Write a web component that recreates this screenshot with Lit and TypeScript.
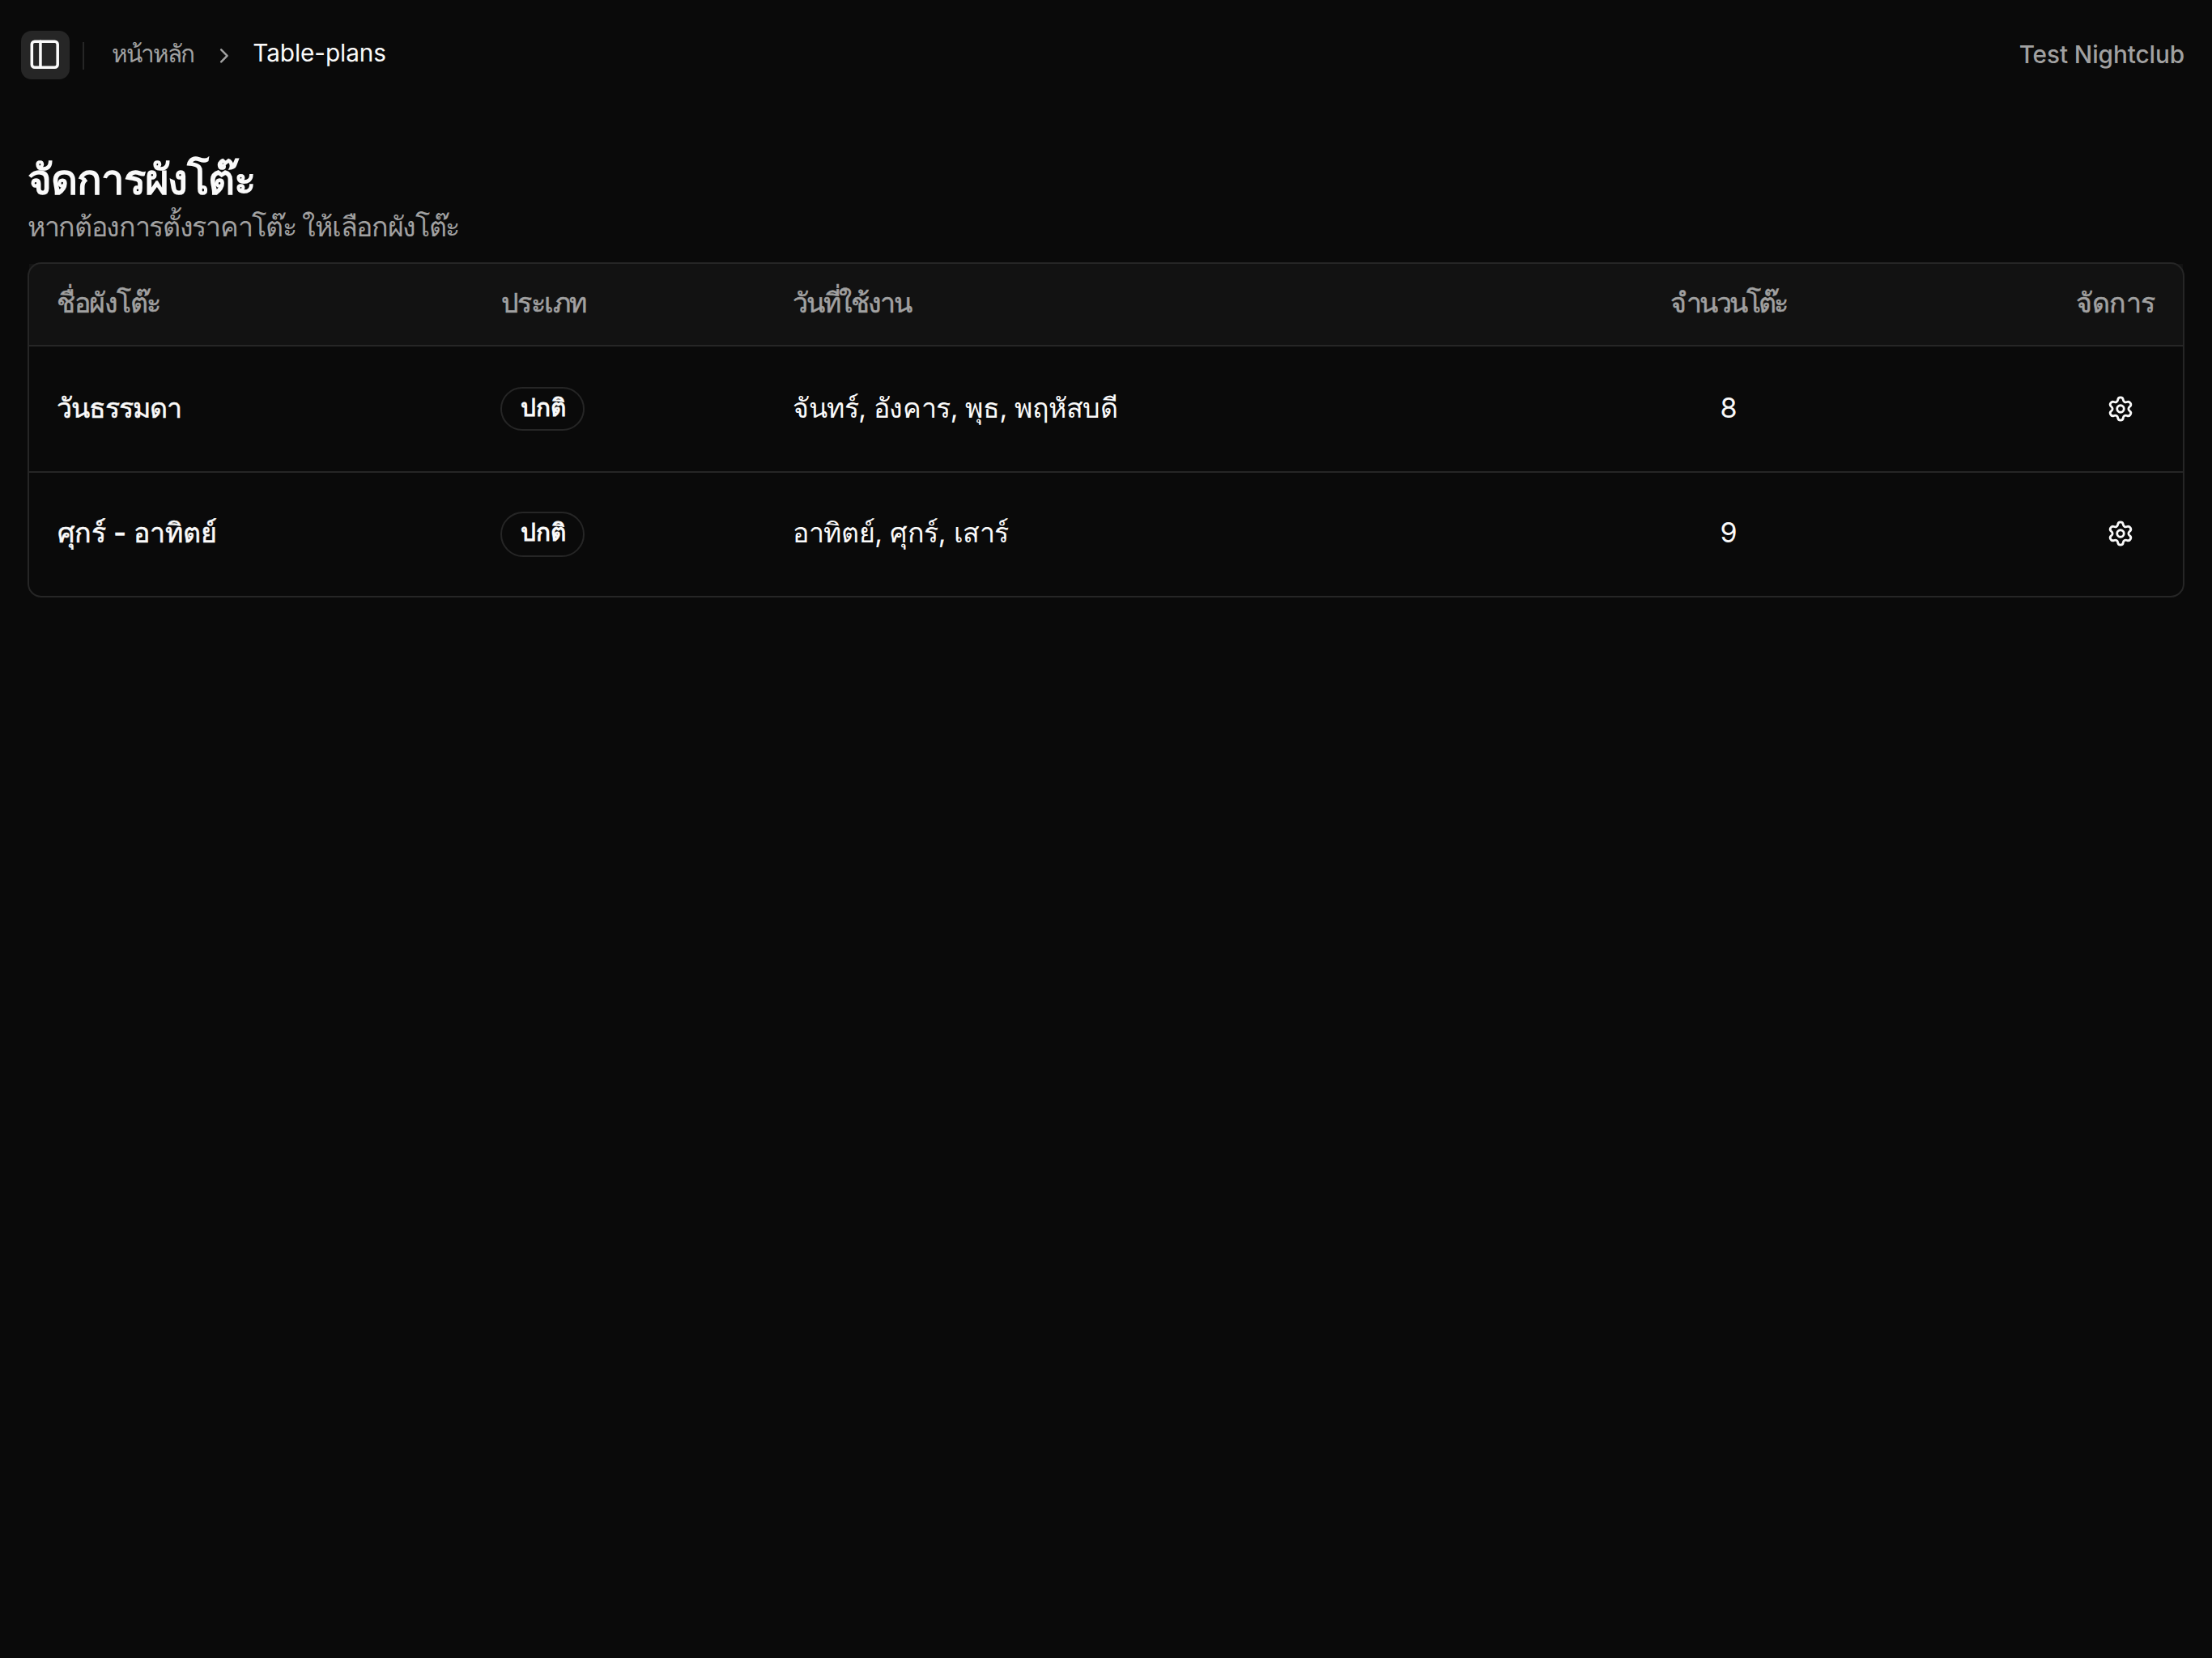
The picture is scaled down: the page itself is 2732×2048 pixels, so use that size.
import { LitElement, html, css } from "lit";
import { customElement } from "lit/decorators.js";

interface Plan {
  name: string;
  nameClass: string;
  days: string;
  daysClass: string;
  count: number;
}

const plans: Plan[] = [
  { name: "วันธรรมดา", nameClass: "t-name1", days: "จันทร์, อังคาร, พุธ, พฤหัสบดี", daysClass: "t-days1", count: 8 },
  { name: "ศุกร์ - อาทิตย์", nameClass: "t-name2", days: "อาทิตย์, ศุกร์, เสาร์", daysClass: "t-days2", count: 9 },
];

const panelIcon = html`<svg class="icon panel" viewBox="0 0 24 24"><rect width="18" height="18" x="3" y="3" rx="2"/><path d="M9 3v18"/></svg>`;
const chevronIcon = html`<svg class="icon chevron" viewBox="0 0 24 24"><path d="m9 18 6-6-6-6"/></svg>`;
const gearIcon = html`<svg class="icon gear" viewBox="0 0 24 24"><path d="M9.671 4.136a2.34 2.34 0 0 1 4.659 0 2.34 2.34 0 0 0 3.319 1.915 2.34 2.34 0 0 1 2.33 4.033 2.34 2.34 0 0 0 0 3.831 2.34 2.34 0 0 1-2.33 4.033 2.34 2.34 0 0 0-3.319 1.915 2.34 2.34 0 0 1-4.659 0 2.34 2.34 0 0 0-3.32-1.915 2.34 2.34 0 0 1-2.33-4.033 2.34 2.34 0 0 0 0-3.831A2.34 2.34 0 0 1 6.35 6.051a2.34 2.34 0 0 0 3.319-1.915"/><circle cx="12" cy="12" r="3"/></svg>`;

@customElement("app-root")
export class AppRoot extends LitElement {
  static styles = css`
    :host {
      display: block;
      box-sizing: border-box;
      min-height: 2048px;
      background: #0a0a0a;
      color: #fafafa;
      font-family: Inter, "Noto Sans", sans-serif;
      font-size: 34px;
      line-height: 51px;
      white-space: nowrap;
    }
    * { box-sizing: border-box; }
    .icon {
      fill: none;
      stroke: currentColor;
      stroke-width: 2;
      stroke-linecap: round;
      stroke-linejoin: round;
      display: block;
      flex: none;
    }
    .bar {
      height: 136px;
      padding: 0 34px 0 26px;
      display: flex;
      align-items: center;
      font-size: 29.75px;
      line-height: 40px;
    }
    .toggle {
      width: 60px;
      height: 60px;
      padding: 0;
      border: 0;
      border-radius: 13px;
      background: #262626;
      color: #fafafa;
      display: flex;
      align-items: center;
      justify-content: center;
    }
    .panel { width: 42.5px; height: 42.5px; margin: 0 1.5px 1.5px 0; }
    .sep { width: 2px; height: 34px; margin: 2px 33.5px 0 16px; background: #262626; }
    .crumbs { display: flex; align-items: center; }
    .home { width: 103px; margin-bottom: 5px; color: #a1a1a1; letter-spacing: -1.9px; }
    .chevron { width: 29.75px; height: 29.75px; margin: 2px 21px 0 21px; color: #a1a1a1; }
    .here { margin-bottom: 6px; letter-spacing: -0.08px; }
    .org { margin-left: auto; margin-bottom: 2px; font-weight: 500; letter-spacing: -0.1px; color: #a1a1a1; }
    main { padding: 55px 34px 0; }
    h1 { margin: 0 0 2px; font-size: 51px; line-height: 61px; font-weight: 700; letter-spacing: -1.1px; }
    .sub { margin: 0 0 19px; color: #a1a1a1; letter-spacing: -1.32px; }
    .table { border: 2px solid #262626; border-radius: 17px; }
    .row { display: grid; grid-template-columns: 548px 361px 955px 470px 326px; height: 154px; }
    .row > * { display: flex; align-items: center; padding: 0 34px; }
    .row > :nth-child(4) { justify-content: center; }
    .row > :nth-child(5) { justify-content: flex-end; }
    .row + .row { height: 156px; border-top: 2px solid #262626; }
    .row.head {
      height: 100px;
      background: rgba(38, 38, 38, 0.32);
      color: #a1a1a1;
      font-weight: 500;
      -webkit-text-stroke: 0.5px currentColor;
    }
    .head > * { padding-bottom: 5px; }
    .row:last-child { height: 154px; }
    .row > .text { padding-bottom: 3px; }
    .row:last-child > .text { padding-bottom: 5px; }
    .name { font-weight: 500; -webkit-text-stroke: 0.5px currentColor; }
    .badge {
      width: 104px;
      height: 54px;
      padding: 0 0 4px 1px;
      border: 2px solid #262626;
      border-radius: 28px;
      display: flex;
      align-items: center;
      justify-content: center;
      font-size: 29.75px;
      font-weight: 600;
      line-height: 40px;
    }
    .row:last-child .badge { height: 56px; padding-bottom: 6px; }
    .action { width: 86px; height: 76px; display: flex; align-items: center; justify-content: center; }
    .gear { width: 34px; height: 34px; }
    .row:last-child .gear { margin-bottom: 2px; }
    .t-h1 { letter-spacing: -1.5px; }
    .row > .t-h2 { letter-spacing: -1.6px; padding-left: 35px; }
    .t-h3 { letter-spacing: -2.2px; }
    .t-h4 { letter-spacing: -2.6px; }
    .t-h5 { letter-spacing: -0.4px; }
    .t-name1 { letter-spacing: -1px; }
    .row > .t-name2 { padding-left: 34.5px; letter-spacing: -0.05px; }
    .t-days1 { letter-spacing: -0.42px; }
    .t-days2 { letter-spacing: -0.35px; }
  `;

  render() {
    return html`
      <header class="bar">
        <button class="toggle">${panelIcon}</button>
        <div class="sep"></div>
        <nav class="crumbs">
          <span class="home">หน้าหลัก</span>${chevronIcon}<span class="here">Table-plans</span>
        </nav>
        <span class="org">Test Nightclub</span>
      </header>
      <main>
        <h1>จัดการผังโต๊ะ</h1>
        <p class="sub">หากต้องการตั้งราคาโต๊ะ ให้เลือกผังโต๊ะ</p>
        <div class="table">
          <div class="row head">
            <div class="t-h1">ชื่อผังโต๊ะ</div>
            <div class="t-h2">ประเภท</div>
            <div class="t-h3">วันที่ใช้งาน</div>
            <div class="t-h4">จำนวนโต๊ะ</div>
            <div class="t-h5">จัดการ</div>
          </div>
          ${plans.map((p) => html`
            <div class="row">
              <div class="text name ${p.nameClass}">${p.name}</div>
              <div><span class="badge">ปกติ</span></div>
              <div class="text ${p.daysClass}">${p.days}</div>
              <div class="text">${p.count}</div>
              <div><span class="action">${gearIcon}</span></div>
            </div>`)}
        </div>
      </main>
    `;
  }
}
